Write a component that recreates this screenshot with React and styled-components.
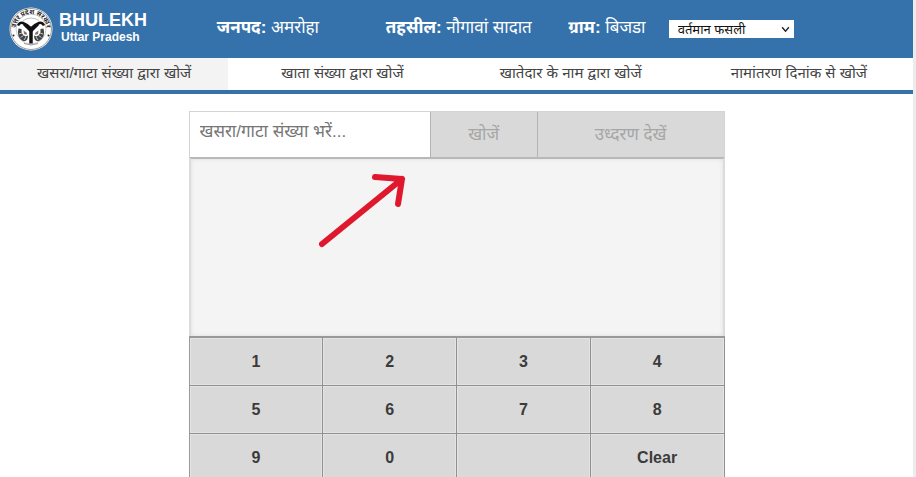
import React, { useState } from "react";
import styled, { createGlobalStyle } from "styled-components";

const tabs = [
  "खसरा/गाटा संख्या द्वारा खोजें",
  "खाता संख्या द्वारा खोजें",
  "खातेदार के नाम द्वारा खोजें",
  "नामांतरण दिनांक से खोजें",
];

const keys = ["1", "2", "3", "4", "5", "6", "7", "8", "9", "0", "", "Clear"];

const Emblem = () => (
  <EmblemSvg viewBox="0 0 88 88" role="img" aria-label="उत्तर प्रदेश सरकार">
    <defs>
      <path id="emblemArc" d="M 15 56 A 31 31 0 1 1 73 56" />
    </defs>
    <circle cx="44" cy="44" r="43" fill="#fff" />
    <circle cx="44" cy="44" r="41" fill="none" stroke="#777" strokeWidth="1.5" />
    <circle cx="44" cy="44" r="30" fill="none" stroke="#999" strokeWidth="1" />
    <text fill="#222" fontSize="13" fontWeight="700">
      <textPath href="#emblemArc" startOffset="50%" textAnchor="middle">
        उत्तर प्रदेश सरकार
      </textPath>
    </text>
    {/* bow and rivers */}
    <path
      d="M18 37 Q22 30 28 32 Q36 35 44 43 Q52 35 60 32 Q66 30 70 37"
      fill="none"
      stroke="#111"
      strokeWidth="5"
    />
    <path d="M30 34 L44 48 L58 34" fill="none" stroke="#111" strokeWidth="6" />
    <path d="M44 44 V73" fill="none" stroke="#111" strokeWidth="7" />
    <path d="M28 27 Q44 17 60 27" fill="none" stroke="#aaa" strokeWidth="1.5" />
    {/* the two fish */}
    <path d="M19 43 Q14 60 28 68 Q38 70 38 57 L33 59 Q24 55 25 44 Z" fill="#444" />
    <path d="M69 43 Q74 60 60 68 Q50 70 50 57 L55 59 Q64 55 63 44 Z" fill="#444" />
    <path d="M29 47 L36 52 L35 56 L30 54 Z M59 47 L52 52 L53 56 L58 54 Z" fill="#777" />
    <path
      d="M20 54 L26 52 M23 61 L29 57 M30 66 L34 60 M68 54 L62 52 M65 61 L59 57 M58 66 L54 60"
      stroke="#eee"
      strokeWidth="1.5"
    />
    <path d="M30 73 Q44 79 58 73" fill="none" stroke="#777" strokeWidth="1.5" />
    <circle cx="9" cy="57" r="2" fill="#222" />
    <circle cx="79" cy="57" r="2" fill="#222" />
  </EmblemSvg>
);

const App = () => {
  const [value, setValue] = useState("");
  const [active, setActive] = useState(0);

  const onKey = (key) => {
    setValue(key === "Clear" ? "" : value + key);
  };

  return (
    <Page>
      <GlobalStyle />
      <Header>
        <Brand>
          <Emblem />
          <BrandText>
            <Title>BHULEKH</Title>
            <Subtitle>Uttar Pradesh</Subtitle>
          </BrandText>
        </Brand>
        <Place>
          <b>जनपद:</b> अमरोहा
        </Place>
        <Place>
          <b>तहसील:</b> नौगावां सादात
        </Place>
        <Place>
          <b>ग्राम:</b> बिजडा
        </Place>
        <SelectWrapper>
          <YearSelect aria-label="फसली">
            <option>वर्तमान फसली</option>
          </YearSelect>
          <Chevron viewBox="0 0 8 6" aria-hidden="true">
            <path d="M1 1 L4 4.5 L7 1" fill="none" stroke="#222" strokeWidth="1.2" />
          </Chevron>
        </SelectWrapper>
      </Header>

      <Tabs>
        {tabs.map((tab, i) => (
          <Tab key={tab} $active={i === active} onClick={() => setActive(i)}>
            {tab}
          </Tab>
        ))}
      </Tabs>

      <Panel>
        <SearchRow>
          <SearchInput
            type="text"
            aria-label="खसरा/गाटा संख्या"
            placeholder="खसरा/गाटा संख्या भरें..."
            value={value}
            onChange={(e) => setValue(e.target.value)}
          />
          <ActionButton disabled>खोजें</ActionButton>
          <ActionButton disabled>उध्दरण देखें</ActionButton>
        </SearchRow>
        <Results>
          <Arrow viewBox="0 0 92 76" aria-hidden="true">
            <path d="M5 70 L85 5 M58 3 L85 5 L81 30" />
          </Arrow>
        </Results>
        <Keypad>
          {keys.map((key, i) => (
            <Key key={i} aria-label={key || "खाली"} onClick={() => onKey(key)}>
              {key}
            </Key>
          ))}
        </Keypad>
      </Panel>
    </Page>
  );
};

const GlobalStyle = createGlobalStyle`
  * {
    box-sizing: border-box;
  }

  body {
    margin: 0;
    background: #fff;
    font-family: "Liberation Sans", "Noto Sans Devanagari", "Noto Sans", sans-serif;
  }

  button, input, select {
    font-family: inherit;
    border-radius: 0;
    margin: 0;
  }
`;

const Page = styled.div`
  min-height: 100vh;
  border-right: 3px solid #ececec;
`;

const Header = styled.header`
  display: grid;
  grid-template-columns: 23.75% 18.5% 20% 11% auto;
  align-items: center;
  height: 58px;
  background: #3572ab;
  color: #fff;
`;

const Brand = styled.div`
  display: flex;
  align-items: center;
  gap: 6px;
  padding-left: 9px;
`;

const EmblemSvg = styled.svg`
  width: 44px;
  height: 44px;
`;

const BrandText = styled.div`
  display: flex;
  flex-direction: column;
  padding-bottom: 2px;
`;

const Title = styled.h1`
  margin: 0;
  font-size: 18px;
  line-height: 18px;
`;

const Subtitle = styled.span`
  padding-left: 2px;
  font-size: 12px;
  font-weight: 700;
  line-height: 16px;
`;

const Place = styled.div`
  padding-bottom: 2px;
  font-size: 17px;
  line-height: 24px;
  white-space: nowrap;
`;

const SelectWrapper = styled.div`
  position: relative;
  width: 125px;
  height: 18px;
`;

const YearSelect = styled.select`
  appearance: none;
  display: block;
  width: 100%;
  height: 100%;
  padding: 0 20px 0 9px;
  border: 0;
  background: #fff;
  color: #111;
  font-size: 13px;
`;

const Chevron = styled.svg`
  position: absolute;
  right: 4px;
  top: 6px;
  width: 9px;
  height: 7px;
  pointer-events: none;
`;

const Tabs = styled.nav`
  display: grid;
  grid-template-columns: repeat(4, 1fr);
  height: 36px;
  border-bottom: 4px solid #3572ab;
`;

const Tab = styled.button`
  padding: 0 0 2px;
  border: 0;
  background: ${(props) => (props.$active ? "#f3f3f3" : "#fff")};
  color: #444;
  font-size: 15px;
  line-height: 20px;
  white-space: nowrap;
`;

const Panel = styled.main`
  width: 90%;
  max-width: 536px;
  margin: 17px auto 0;
`;

const SearchRow = styled.div`
  display: grid;
  grid-template-columns: 9fr 4fr 7fr;
  height: 46px;
  border: 1px solid #d4d4d4;
  border-bottom: 0;
`;

const SearchInput = styled.input`
  min-width: 0;
  padding: 0 10px 6px;
  border: 0;
  background: #fff;
  color: #333;
  font-size: 17px;

  &::placeholder {
    color: #757575;
  }
`;

const ActionButton = styled.button`
  padding: 2px 0 0;
  border: 0;
  border-left: 1px solid #b4b4b4;
  background: #d9d9d9;
  color: #a6a6a6;
  font-size: 17px;
`;

const Results = styled.div`
  position: relative;
  height: 179px;
  border: 2px solid #dcdcdc;
  border-top-color: #b8b8b8;
  border-bottom: 0;
  background: #f4f4f4;
  box-shadow: inset 0 0 4px #ddd;
`;

/* hint drawn over the results box */
const Arrow = styled.svg`
  position: absolute;
  left: 126px;
  top: 15px;
  width: 92px;
  height: 76px;

  path {
    fill: none;
    stroke: #e0182d;
    stroke-width: 6;
    stroke-linecap: round;
    stroke-linejoin: round;
  }
`;

const Keypad = styled.div`
  display: grid;
  grid-template-columns: repeat(4, 1fr);
  border-top: 2px solid #999;
  border-left: 1px solid #999;
`;

const Key = styled.button`
  height: 48px;
  padding: 0;
  border: 0;
  border-right: 1px solid #909090;
  border-bottom: 1px solid #909090;
  background: #d9d9d9;
  box-shadow: inset 0 0 0 1px #e4e4e4;
  color: #3b3b3b;
  font-size: 16px;
  font-weight: 700;
`;

export default App;
